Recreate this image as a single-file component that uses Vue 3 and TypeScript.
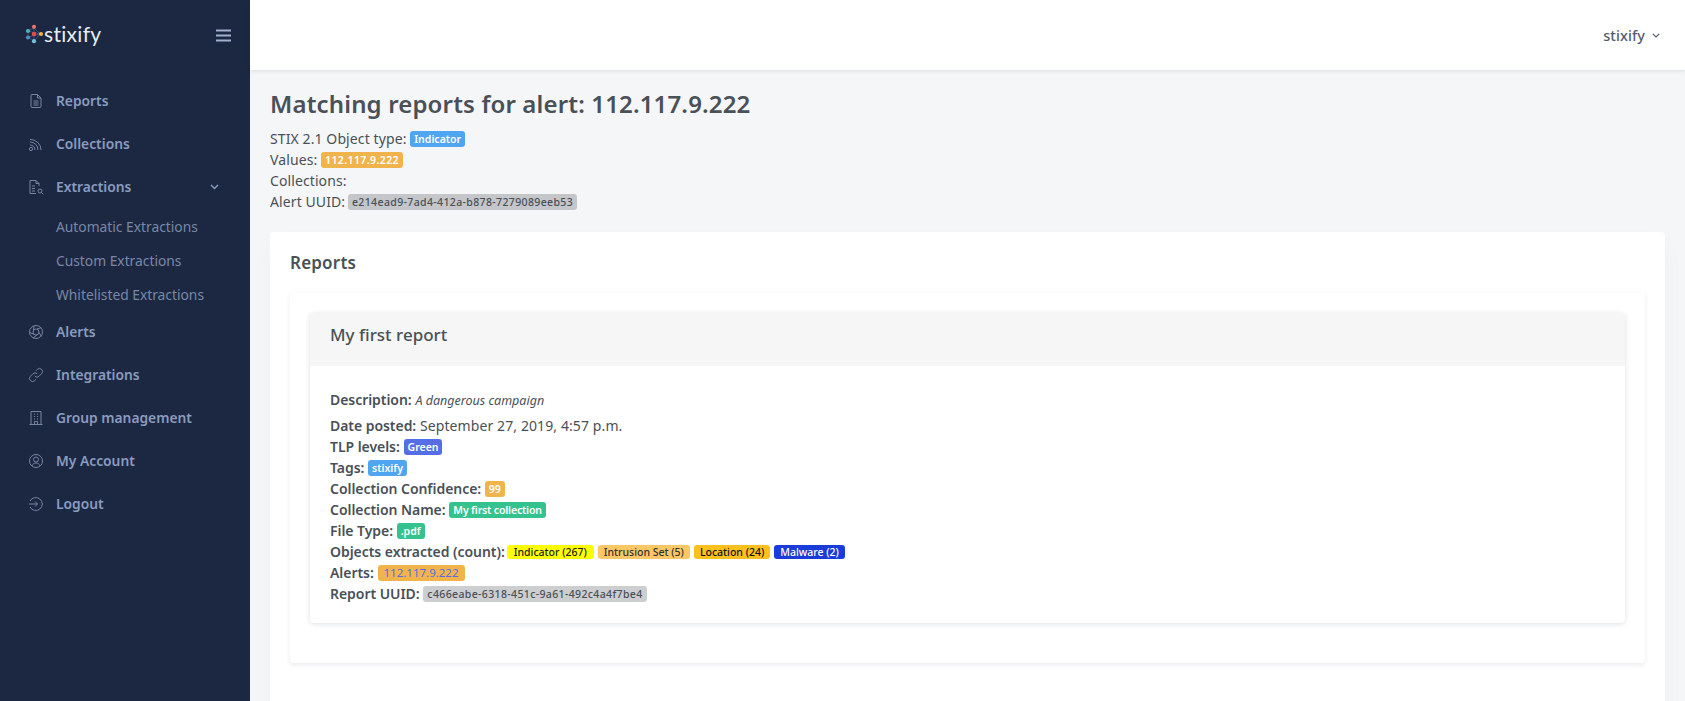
<script setup lang="ts">
const subs = ['Automatic Extractions', 'Custom Extractions', 'Whitelisted Extractions']
</script>

<template>
  <div class="app">
    <aside class="side">
      <div class="brand">
        <div class="logo">
          <svg width="19" height="20" viewBox="0 0 19 20">
            <g stroke="#5a6a8a" stroke-width="0.6" fill="none"><path d="M9 4 3 7l0 6 6 4 6-7z" /><path d="M9 4v13M3 7l12 3M3 13l12-3" /></g>
            <circle cx="3" cy="7" r="2.100" fill="#4fb3bf" />
            <circle cx="9" cy="2.800" r="2.100" fill="#e5736b" />
            <circle cx="9" cy="10" r="2.300" fill="#e5484d" />
            <circle cx="3" cy="13.500" r="2.100" fill="#4a90c2" />
            <circle cx="9" cy="17.200" r="2.100" fill="#6fc3d6" />
            <circle cx="16" cy="10" r="2.100" fill="#efb34a" />
          </svg>
          <span class="logotext">stixify</span>
        </div>
        <svg class="burger" width="15" height="13" viewBox="0 0 15 13"><path d="M0 1.500h15M0 6.500h15M0 11.500h15" stroke="#9fb0d0" stroke-width="2" /></svg>
      </div>
      <nav class="nav">
        <a class="item">
          <svg class="ic" viewBox="0 0 16 16"><path d="M3 2.500a1 1 0 0 1 1-1h5.500L13 5v8.500a1 1 0 0 1-1 1H4a1 1 0 0 1-1-1z M9.500 1.500V5H13 M5.500 8h5M5.500 10h5M5.500 12h5" /></svg>
          <span>Reports</span>
        </a>
        <a class="item">
          <svg class="ic" viewBox="0 0 16 16"><circle cx="3" cy="13" r="1.600" /><path d="M2 9a5 5 0 0 1 5 5M2 6a8 8 0 0 1 8 8M2 3.500A10.500 10.500 0 0 1 13 14" /></svg>
          <span>Collections</span>
        </a>
        <a class="item">
          <svg class="ic" viewBox="0 0 16 16"><path d="M11 7V4.500L8 1.500H2v13h6 M8 1.500V4.500h3 M4 7h3M4 9.500h3M4 12h3" /><circle cx="12" cy="12" r="2" /><path d="m13.500 13.500 1.800 1.800" /></svg>
          <span>Extractions</span>
          <svg class="chev" width="9" height="6" viewBox="0 0 9 6"><path d="m1 1 3.500 3.500L8 1" /></svg>
        </a>
        <div class="subs">
          <a v-for="s in subs" :key="s" class="sub">{{ s }}</a>
        </div>
        <a class="item">
          <svg class="ic" viewBox="0 0 16 16"><circle cx="8" cy="8" r="6.500" /><circle cx="8" cy="8" r="3" /><path d="M5.500 6.500 6 1.800M9 5.200l4.200-1.600M11 8.500l2.500 3.900M9.500 10.600 5 14M6.200 10.400 1.700 8.500" /></svg>
          <span>Alerts</span>
        </a>
        <a class="item">
          <svg class="ic" viewBox="0 0 16 16"><path d="M6.800 9.200a3 3 0 0 0 4.300 0l2.500-2.500a3 3 0 0 0-4.300-4.300L8 3.700" /><path d="M9.200 6.800a3 3 0 0 0-4.300 0l-2.500 2.500a3 3 0 0 0 4.300 4.300L8 12.300" /></svg>
          <span>Integrations</span>
        </a>
        <a class="item">
          <svg class="ic" viewBox="0 0 16 16"><path d="M3 14.500V1.500h10v13M1.500 14.500h13M6.500 14.500v-3h3v3M6 4h1M9 4h1M6 6.500h1M9 6.500h1M6 9h1M9 9h1" /></svg>
          <span>Group management</span>
        </a>
        <a class="item">
          <svg class="ic" viewBox="0 0 16 16"><circle cx="8" cy="8" r="6.500" /><circle cx="8" cy="6.500" r="2.500" /><path d="M3.800 13c.8-2 2.300-3 4.200-3s3.400 1 4.200 3" /></svg>
          <span>My Account</span>
        </a>
        <a class="item">
          <svg class="ic" viewBox="0 0 16 16"><path d="M2 5a6.500 6.500 0 1 1 0 6M1 8h8.500M7 5.500 9.500 8 7 10.500" /></svg>
          <span>Logout</span>
        </a>
      </nav>
    </aside>
    <div class="main">
      <header class="top">
        <span class="user">stixify</span>
        <svg class="userchev" width="8" height="5" viewBox="0 0 8 5"><path d="m.8.8 3.200 3.200L7.200.8" /></svg>
      </header>
      <main class="content">
        <h1>Matching reports for alert: 112.117.9.222</h1>
        <div class="row">STIX 2.1 Object type: <span class="b blue">Indicator</span></div>
        <div class="row">Values: <span class="b orange digits">112.117.9.222</span></div>
        <div class="row">Collections:</div>
        <div class="row">Alert UUID: <span class="b grey">e214ead9-7ad4-412a-b878-7279089eeb53</span></div>
        <section class="card">
          <h2>Reports</h2>
          <div class="outer">
            <div class="inner">
              <div class="ihead">My first report</div>
              <div class="ibody">
                <p class="desc"><strong>Description:</strong> <em>A dangerous campaign</em></p>
                <div class="row"><strong>Date posted:</strong> September 27, 2019, 4:57 p.m.</div>
                <div class="row"><strong>TLP levels:</strong> <span class="b indigo">Green</span></div>
                <div class="row"><strong>Tags:</strong> <span class="b blue">stixify</span></div>
                <div class="row"><strong>Collection Confidence:</strong> <span class="b orange">99</span></div>
                <div class="row"><strong>Collection Name:</strong> <span class="b green tight">My first collection</span></div>
                <div class="row"><strong>File Type:</strong> <span class="b green">.pdf</span></div>
                <div class="row objects"><strong>Objects extracted (count):</strong>
                  <span class="b obj yellow">Indicator (267)</span>
                  <span class="b obj peach">Intrusion Set (5)</span>
                  <span class="b obj amber">Location (24)</span>
                  <span class="b obj navy">Malware (2)</span>
                </div>
                <div class="row"><strong>Alerts:</strong> <span class="b orange link">112.117.9.222</span></div>
                <div class="row"><strong>Report UUID:</strong> <span class="b grey light">c466eabe-6318-451c-9a61-492c4a4f7be4</span></div>
              </div>
            </div>
          </div>
        </section>
      </main>
    </div>
  </div>
</template>

<style>
html, body { margin: 0; height: 100%; overflow: hidden; background: #f5f6f8; }
</style>

<style scoped>
.app {
  display: flex;
  height: 701px;
  overflow: hidden;
  font-family: "Noto Sans", "Open Sans", sans-serif;
  font-size: 14px;
  letter-spacing: .1px;
  color: #495057;
}
.side { width: 250px; flex: none; background: #1c2842; letter-spacing: 0; }
.brand { height: 70px; display: flex; align-items: center; justify-content: space-between; padding: 0 19px 0 25px; }
.logo { display: flex; align-items: center; margin-top: -2px; }
.logotext { font-family: "Lato", sans-serif; font-size: 21px; color: #e9edf3; letter-spacing: .3px; line-height: 20px; }
.nav { padding-top: 9px; display: flex; flex-direction: column; }
.item { display: flex; align-items: center; height: 43px; padding: 0 31px 0 28px; color: #8a9bc0; font-weight: 600; font-size: 13.800px; }
.ic { width: 16px; height: 16px; margin-right: 12px; fill: none; stroke: #75849f; stroke-width: 1; }
.chev { margin-left: auto; fill: none; stroke: #8a9bc0; stroke-width: 1.500; }
.subs { display: flex; flex-direction: column; padding-top: 2px; margin-bottom: -2px; }
.sub { height: 34px; line-height: 34px; padding-left: 56px; color: #7987a6; font-size: 13.800px; }
.main { flex: 1; min-width: 0; }
.top { height: 70px; background: #fff; box-shadow: 0 1px 4px rgba(18, 38, 63, .12); display: flex; align-items: center; justify-content: flex-end; padding-right: 25px; gap: 7px; position: relative; }
.user { color: #555b6d; font-weight: 500; font-size: 14.500px; }
.userchev { fill: none; stroke: #555b6d; stroke-width: 1.200; }
.content { padding: 20px; }
h1 { margin: 0 0 10px; font-size: 24px; font-weight: 600; letter-spacing: .15px; line-height: 28px; color: #495057; }
.row { line-height: 21px; }
.b { display: inline-block; vertical-align: 1px; padding: 0 4px; height: 16px; line-height: 16px; border-radius: 3px; font-size: 10.500px; font-weight: 600; color: #fff; letter-spacing: 0; }
.blue { background: #50a5f1; }
.orange { background: #f1b44c; }
.digits { letter-spacing: .4px; }
.grey { background: #c4c6c9; color: #495057; font-weight: 500; letter-spacing: .37px; margin-left: -1px; }
.light { background: #cdcecf; margin-left: 0; }
.indigo { background: #556ee6; }
.green { background: #34c38f; }
.tight { letter-spacing: -.15px; }
.objects strong { margin-right: 2px; }
.obj { height: 14px; line-height: 14px; padding: 0 6px; margin-right: 4px; font-weight: 500; }
.yellow { background: #ffff00; color: #222; padding: 0 7px; }
.peach { background: #fdc765; color: #333; }
.amber { background: #fdc01d; color: #111; }
.navy { background: #1c3bd8; color: #fff; }
.link { color: #556ee6; font-weight: 400; font-size: 11.500px; padding: 0 6px; }
.card { margin-top: 20px; background: #fff; border-radius: 4px; box-shadow: 0 12px 24px rgba(18, 38, 63, .03); padding: 20px; height: 600px; box-sizing: border-box; }
h2 { margin: 1px 0 19px; font-size: 17px; font-weight: 600; letter-spacing: .2px; line-height: 20px; color: #495057; }
.outer { border-radius: 4px; box-shadow: 0 2px 5px rgba(18, 38, 63, .09); padding: 21px 20px 40px; }
.inner { border-radius: 4px; box-shadow: 0 1px 5px rgba(18, 38, 63, .15); }
.ihead { background: #f6f6f6; height: 53px; line-height: 43px; padding-left: 20px; font-size: 17px; font-weight: 500; letter-spacing: 0; border-radius: 4px 4px 0 0; }
.ibody { padding: 23px 20px 19px; }
.desc { margin: 0 0 4px; line-height: 21px; }
.desc em { font-size: 12.500px; letter-spacing: 0; }
strong { font-weight: 600; letter-spacing: -.05px; }
</style>
